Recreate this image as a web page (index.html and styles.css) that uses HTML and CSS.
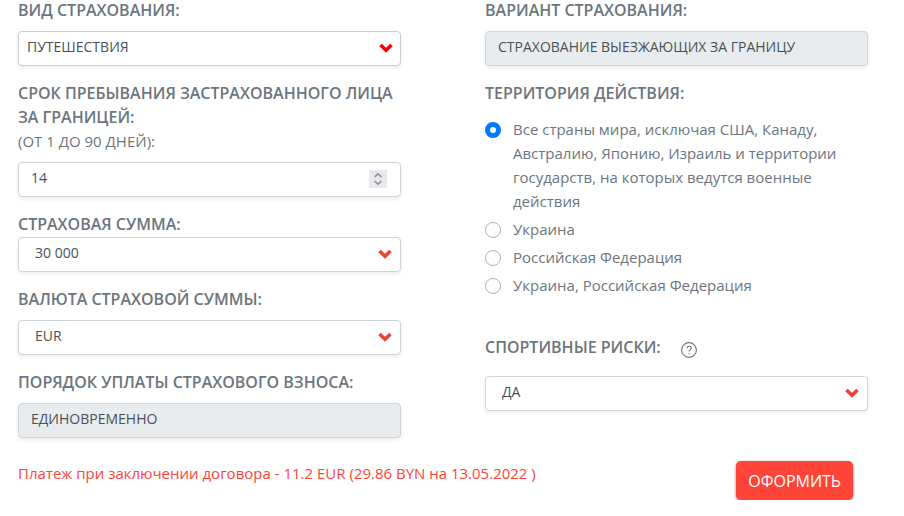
FILE: index.html
```
<!DOCTYPE html>
<html lang="ru">
	<head>
		<meta charset="UTF-8">
		<meta name="viewport" content="width=device-width, initial-scale=1">
		<title>Страхование</title>
		<link rel="stylesheet" href="styles.css">
	</head>
	<body>
		<form class="calc">
			<div class="row">
				<div class="col">
					<div class="group">
						<label class="label" for="kind">ВИД СТРАХОВАНИЯ:</label>
						<div class="select select-main">
							<select class="field" id="kind">
								<option>ПУТЕШЕСТВИЯ</option>
							</select>
							<svg class="arrow" viewBox="0 0 14 10"><path d="M1.5 2L7 7.3L12.5 2"/></svg>
						</div>
					</div>
					<div class="group">
						<label class="label" for="days">СРОК ПРЕБЫВАНИЯ ЗАСТРАХОВАННОГО ЛИЦА<br>ЗА ГРАНИЦЕЙ:<span class="note">(ОТ 1 ДО 90 ДНЕЙ):</span></label>
						<div class="number">
							<input class="field" id="days" type="number" min="1" max="90" value="14">
							<svg class="spin" viewBox="0 0 18 18"><path d="M5.5 7L9 3.8L12.5 7M5.5 11L9 14.2L12.5 11"/></svg>
						</div>
					</div>
					<div class="group">
						<label class="label label-tight" for="sum">СТРАХОВАЯ СУММА:</label>
						<div class="select">
							<select class="field" id="sum">
								<option>30 000</option>
							</select>
							<svg class="arrow" viewBox="0 0 14 10"><path d="M1.5 2L7 7.3L12.5 2"/></svg>
						</div>
					</div>
					<div class="group">
						<label class="label" for="currency">ВАЛЮТА СТРАХОВОЙ СУММЫ:</label>
						<div class="select">
							<select class="field" id="currency">
								<option>EUR</option>
							</select>
							<svg class="arrow" viewBox="0 0 14 10"><path d="M1.5 2L7 7.3L12.5 2"/></svg>
						</div>
					</div>
					<div class="group">
						<label class="label" for="order">ПОРЯДОК УПЛАТЫ СТРАХОВОГО ВЗНОСА:</label>
						<input class="field" id="order" type="text" value="ЕДИНОВРЕМЕННО" readonly>
					</div>
				</div>
				<div class="col">
					<div class="group">
						<label class="label" for="variant">ВАРИАНТ СТРАХОВАНИЯ:</label>
						<input class="field" id="variant" type="text" value="СТРАХОВАНИЕ ВЫЕЗЖАЮЩИХ ЗА ГРАНИЦУ" readonly>
					</div>
					<fieldset class="territory">
						<legend class="label">ТЕРРИТОРИЯ ДЕЙСТВИЯ:</legend>
						<div class="radios">
							<label class="radio"><input type="radio" name="territory" checked><span>Все страны мира, исключая США, Канаду, Австралию, Японию, Израиль и территории государств, на которых ведутся военные действия</span></label>
							<label class="radio"><input type="radio" name="territory"><span>Украина</span></label>
							<label class="radio"><input type="radio" name="territory"><span>Российская Федерация</span></label>
							<label class="radio"><input type="radio" name="territory"><span>Украина, Российская Федерация</span></label>
						</div>
					</fieldset>
					<div class="group">
						<div class="label-row">
							<label class="label" for="sport">СПОРТИВНЫЕ РИСКИ:</label>
							<button class="help" type="button" aria-label="Подсказка">
								<svg viewBox="0 0 16 16"><circle cx="8" cy="8" r="7.4"/><path d="M6 6.3C6 3.6 10.2 3.7 10.2 6.2C10.2 7.8 8.1 7.8 8.1 9.6M8.1 11V12.3"/></svg>
							</button>
						</div>
						<div class="select">
							<select class="field" id="sport">
								<option>ДА</option>
							</select>
							<svg class="arrow" viewBox="0 0 14 10"><path d="M1.5 2L7 7.3L12.5 2"/></svg>
						</div>
					</div>
				</div>
			</div>
			<div class="total">
				<p class="price">Платеж при заключении договора - 11.2 EUR (29.86 BYN на 13.05.2022 )</p>
				<button class="submit" type="submit">ОФОРМИТЬ</button>
			</div>
		</form>
	</body>
</html>
```
FILE: styles.css
```
*{
    box-sizing: border-box;
    margin: 0;
    padding: 0;
}
body{
    background: #fff;
    color: #6c757d;
    font-family: "Open Sans", "Noto Sans", sans-serif;
    font-size: 15px;
    line-height: 24px;
}
.calc{
    margin-top: -2px;
    padding: 0 36px 0 18px;
}
.row{
    display: grid;
    grid-template-columns: 1fr 1fr;
    column-gap: 84px;
}
.group{
    margin-bottom: 15px;
}
.label{
    display: block;
    margin-bottom: 9px;
    font-size: 16px;
    font-weight: 600;
    white-space: nowrap;
}
.label-tight{
    margin-bottom: 1px;
}
.note{
    display: block;
    font-size: 15px;
    font-weight: 400;
}
.field{
    display: block;
    width: 100%;
    height: 35px;
    padding: 0 12px 4px;
    border: 1px solid #ced4da;
    border-radius: 4px;
    background: #fff;
    box-shadow: 0 2px 4px rgba(0, 0, 0, .08);
    color: #495057;
    font-family: inherit;
    font-size: 14px;
    appearance: none;
}
.field[readonly]{
    background: #e9ecef;
}
.select, .number{
    position: relative;
}
.select .field{
    padding-left: 16px;
}
.select-main .field{
    padding-left: 8px;
    border-color: #ccc;
}
.arrow{
    position: absolute;
    top: 12px;
    right: 9px;
    width: 14px;
    height: 10px;
    fill: none;
    stroke: #ea4335;
    stroke-width: 3.6;
    pointer-events: none;
}
.select-main .arrow{
    right: 8px;
    stroke: #f00;
}
.number .field{
    appearance: textfield;
}
.number .field::-webkit-inner-spin-button{
    display: none;
}
.spin{
    position: absolute;
    top: 8px;
    right: 14px;
    width: 18px;
    height: 18px;
    background: #e9e9ed;
    fill: none;
    stroke: #8f8f9d;
    stroke-width: 1.6;
    pointer-events: none;
}
.territory{
    margin-bottom: 38px;
    border: 0;
}
.territory .label{
    margin-bottom: 12px;
}
.radios{
    display: grid;
    row-gap: 4px;
}
.radio{
    display: flex;
    align-items: flex-start;
    gap: 12px;
}
.radio input{
    flex: none;
    width: 16px;
    height: 16px;
    margin-top: 5px;
    border: 1px solid #adb5bd;
    border-radius: 50%;
    background: #fff;
    appearance: none;
}
.radio input:checked{
    border: 5px solid #007bff;
}
.label-row{
    display: flex;
    align-items: center;
    gap: 20px;
    margin-bottom: 17px;
}
.label-row .label{
    margin-bottom: 0;
}
.help{
    width: 16px;
    height: 16px;
    margin-top: 6px;
    border: 0;
    background: none;
}
.help svg{
    display: block;
    fill: none;
    stroke: #6c757d;
    stroke-width: 1.1;
}
.total{
    display: flex;
    justify-content: space-between;
    align-items: flex-start;
    margin-top: 8px;
    padding-right: 15px;
}
.price{
    color: #ff4438;
}
.submit{
    height: 39px;
    padding: 0 12px;
    border: 0;
    border-radius: 5px;
    background: #ff4438;
    box-shadow: 0 1px 3px rgba(0, 0, 0, .5);
    color: #fff;
    font-family: inherit;
    font-size: 16px;
}
```
